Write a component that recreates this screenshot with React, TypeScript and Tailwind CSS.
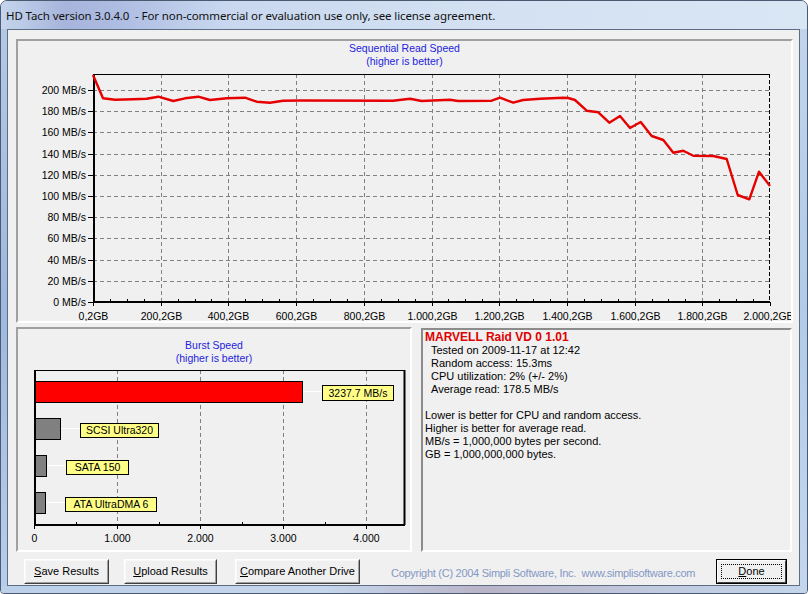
import React from "react";

const FONT = "Liberation Sans, Arial, sans-serif";

const seqPts: [number, number][] = [
  [93, 75], [103, 98.3], [115, 99.7], [133, 99.3], [146.7, 98.7], [158.3, 96.7], [173.3, 101], [185, 98.3],
  [198.3, 96.7], [210, 100], [226.7, 98.3], [245, 97.7], [256.7, 101.7], [270, 102.7], [283, 100.7], [300, 100.5],
  [393, 100.7], [410, 98.7], [421.7, 101], [450, 99.7], [458, 101], [491.7, 100.7], [500, 97.7], [513.3, 102.7],
  [523, 100], [540, 98.7], [563.3, 97.7], [568.3, 98], [575, 100], [586.7, 110.7], [598.3, 112.3], [609.3, 122.7],
  [620, 116], [630, 128], [640.7, 122], [651.7, 136], [663.3, 140], [673.3, 152.7], [683.3, 150.7], [693.3, 155.7],
  [713.3, 156], [726.7, 159], [737.7, 195], [749.3, 199.3], [759, 171.7], [770, 186],
];

function SeqChart() {
  const X0 = 93, X1 = 770, Y0 = 74, Y1 = 302;
  const xs = Array.from({ length: 11 }, (_, i) => Math.round(X0 + i * 67.7) + 0.5);
  const ys = Array.from({ length: 11 }, (_, k) => Math.round(Y1 - k * 21.2) + 0.5);
  const xl = ["0,2GB", "200,2GB", "400,2GB", "600,2GB", "800,2GB", "1.000,2GB", "1.200,2GB", "1.400,2GB", "1.600,2GB", "1.800,2GB", "2.000,2GB"];
  const minors = Array.from({ length: 41 }, (_, j) => Math.round(X0 + j * 16.925) + 0.5);
  return (
    <svg width={773} height={253} className="block">
      <g transform="translate(-18 -68)" fontFamily={FONT} fontSize={10.5}>
        {ys.slice(1).map((y, k) => (
          <line key={"h" + k} x1={X0} x2={X1} y1={y} y2={y} stroke="#808080" strokeDasharray="4 3" />
        ))}
        {xs.slice(1, 10).map((x, i) => (
          <line key={"v" + i} x1={x} x2={x} y1={Y0} y2={Y1} stroke="#808080" strokeDasharray="4 3" />
        ))}
        {minors.map((x, j) => (
          <line key={"m" + j} x1={x} x2={x} y1={j % 4 === 0 ? Y1 + 4 : Y1 - 3} y2={Y1} stroke="#000" />
        ))}
        {ys.map((y, k) => (
          <g key={"y" + k}>
            <line x1={88} x2={93} y1={y} y2={y} stroke="#000" />
            <text x={86} y={y + 3.8} textAnchor="end" fill="#000">{k * 20} MB/s</text>
          </g>
        ))}
        {xs.map((x, i) => (
          <text key={"xl" + i} x={i === 10 ? x - 2 : x} y={320} textAnchor="middle" fill="#000">{xl[i]}</text>
        ))}
        <line x1={X0} x2={X1} y1={74.5} y2={74.5} stroke="#000" />
        <line x1={769.5} x2={769.5} y1={Y0} y2={Y1} stroke="#000" strokeDasharray="4 2" />
        <line x1={94} x2={94} y1={Y0} y2={Y1 + 1} stroke="#000" strokeWidth={2} />
        <line x1={X0} x2={X1} y1={302} y2={302} stroke="#000" strokeWidth={2} />
        <polyline
          points={seqPts.map((p) => p.join(",")).join(" ")}
          fill="none"
          stroke="#e60000"
          strokeWidth={2.4}
          strokeLinejoin="round"
        />
      </g>
    </svg>
  );
}

function BurstChart() {
  const X0 = 34, X1 = 405, Y0 = 370, Y1 = 525;
  const step = 83.1;
  const xs = [0, 1, 2, 3, 4].map((i) => Math.round(X0 + i * step) + 0.5);
  const labels = ["0", "1.000", "2.000", "3.000", "4.000"];
  const bars = [
    { w: 302, y: 381, fill: "#ff0000", lx: 322, lw: 71, ly: 385, lh: 15, t: "3237.7 MB/s" },
    { w: 60, y: 418, fill: "#808080", lx: 80, lw: 78, ly: 423, lh: 14, t: "SCSI Ultra320" },
    { w: 46, y: 455, fill: "#808080", lx: 66, lw: 62, ly: 460, lh: 14, t: "SATA 150" },
    { w: 45, y: 492, fill: "#808080", lx: 65, lw: 91, ly: 497, lh: 14, t: "ATA UltraDMA 6" },
  ];
  return (
    <svg width={392} height={185} className="block">
      <g transform="translate(-18 -365)" fontFamily={FONT} fontSize={10.5}>
        {xs.slice(1).map((x, i) => (
          <line key={"v" + i} x1={x} x2={x} y1={Y0} y2={Y1} stroke="#808080" strokeDasharray="4 3" />
        ))}
        {Array.from({ length: 9 }, (_, j) => Math.round(X0 + j * step / 2) + 0.5).map((x, j) => (
          <line key={"m" + j} x1={x} x2={x} y1={j % 2 === 0 ? Y1 + 4 : Y1 - 3} y2={Y1} stroke="#000" />
        ))}
        {xs.map((x, i) => (
          <text key={"l" + i} x={x} y={542} textAnchor="middle" fill="#000">{labels[i]}</text>
        ))}
        {bars.map((b, i) => (
          <g key={"b" + i}>
            <line x1={b.w} x2={b.lx} y1={b.y + 10.5} y2={b.y + 10.5} stroke="#ffffff" />
            <rect x={X0 + 0.5} y={b.y + 0.5} width={b.w - X0} height={21} fill={b.fill} stroke="#000" />
            <rect x={b.lx + 0.5} y={b.ly + 0.5} width={b.lw} height={b.lh} fill="#ffff88" stroke="#000" />
            <text x={b.lx + 0.5 + b.lw / 2} y={b.ly + b.lh / 2 + 4.3} textAnchor="middle" fill="#000">{b.t}</text>
          </g>
        ))}
        <rect x={X0 + 1} y={Y0 + 0.5} width={X1 - X0 - 1.5} height={Y1 - Y0 - 0.5} fill="none" stroke="#000" strokeWidth={1} />
        <line x1={35} x2={35} y1={Y0} y2={Y1 + 1} stroke="#000" strokeWidth={2} />
        <line x1={X0} x2={X1} y1={Y1} y2={Y1} stroke="#000" strokeWidth={2} />
        <line x1={X1 - 0.5} x2={X1 - 0.5} y1={Y0} y2={Y1} stroke="#000" strokeWidth={2} />
      </g>
    </svg>
  );
}

function Btn({ w, ul, rest }: { w: string; ul: string; rest: string }) {
  return (
    <div className={`${w} h-[25px] border border-t-white border-l-white border-r-[#404040] border-b-[#404040]`}>
      <div className="w-full h-full border border-t-[#f8f8f8] border-l-[#f8f8f8] border-r-[#a0a0a0] border-b-[#a0a0a0] bg-[#f0f0f0] flex items-center justify-center text-[11px] text-black">
        <span>
          <span className="underline underline-offset-[1px]">{ul}</span>
          {rest}
        </span>
      </div>
    </div>
  );
}

export default function App() {
  return (
    <div className="w-[808px] h-[594px] flex flex-col overflow-hidden rounded-t-[7px] rounded-b-[4px] border border-[#4a5a70] bg-[linear-gradient(180deg,#c2d4ec_0%,#b7cce8_60%,#c5d7ee_100%)] font-['Liberation_Sans',Arial,sans-serif] text-black">
      <div className="h-[28px] shrink-0 flex items-center pl-[5px] pt-[1px] bg-[linear-gradient(90deg,#c5d5ec_0%,#a7b4dc_8%,#aebde2_15%,#c9d8ef_28%,#d3e1f2_60%,#d9e6f4_100%)] text-[11.5px] tracking-[-0.1px] font-['Noto_Sans',sans-serif] text-[#111]">
        HD Tach version 3.0.4.0&nbsp; - For non-commercial or evaluation use only, see license agreement.
      </div>
      <div className="flex flex-1">
        <div className="w-[6px] shrink-0 bg-[linear-gradient(180deg,#b4c8e4,#9fb8de_50%,#b8cde9)]" />
        <div className="w-[793px] h-[557px] shrink-0 border border-[#5d6e84] bg-[#f0f0f0] flex flex-col pl-[8px] pt-[9px]">
          <div className="w-[777px] h-[284px] shrink-0 border-2 border-t-[#a0a0a0] border-l-[#a0a0a0] border-r-white border-b-white flex flex-col overflow-hidden">
            <div className="pt-[1px] leading-[13px] text-[10.5px] text-[#2323dd] text-center">
              <div>Sequential Read Speed</div>
              <div>(higher is better)</div>
            </div>
            <SeqChart />
          </div>
          <div className="mt-[4px] flex h-[225px] shrink-0">
            <div className="w-[396px] h-full border-2 border-t-[#a0a0a0] border-l-[#a0a0a0] border-r-white border-b-white flex flex-col overflow-hidden">
              <div className="pt-[10px] leading-[13px] text-[10.5px] text-[#2323dd] text-center">
                <div>Burst Speed</div>
                <div>(higher is better)</div>
              </div>
              <BurstChart />
            </div>
            <div className="ml-[9px] mt-[1px] w-[371px] h-[224px] border-2 border-t-[#8c8c8c] border-l-[#8c8c8c] border-r-white border-b-white bg-[#f0f0f0] pt-[1px] pl-[2px] text-[11px] leading-[13px] text-black">
              <div className="text-[12px] font-bold text-[#e00000]">MARVELL Raid VD 0 1.01</div>
              <div className="pl-[6px]">Tested on 2009-11-17 at 12:42</div>
              <div className="pl-[6px]">Random access: 15.3ms</div>
              <div className="pl-[6px]">CPU utilization: 2% (+/- 2%)</div>
              <div className="pl-[6px]">Average read: 178.5 MB/s</div>
              <div className="h-[13px]" />
              <div>Lower is better for CPU and random access.</div>
              <div>Higher is better for average read.</div>
              <div>MB/s = 1,000,000 bytes per second.</div>
              <div>GB = 1,000,000,000 bytes.</div>
            </div>
          </div>
          <div className="mt-[7px] flex w-[771px] h-[25px] shrink-0">
            <div className="ml-[8px]"><Btn w="w-[85px]" ul="S" rest="ave Results" /></div>
            <div className="ml-[15px]"><Btn w="w-[93px]" ul="U" rest="pload Results" /></div>
            <div className="ml-[18px]"><Btn w="w-[125px]" ul="C" rest="ompare Another Drive" /></div>
            <div className="ml-[31px] pt-[8px] text-[11px] tracking-[-0.28px] text-[#8498c4] whitespace-pre leading-[13px]">
              Copyright (C) 2004 Simpli Software, Inc.  www.simplisoftware.com
            </div>
            <div className="ml-auto w-[71px] h-[25px] border border-black">
              <div className="relative w-full h-full border border-t-white border-l-white border-r-[#404040] border-b-[#404040] bg-[#f0f0f0] flex items-center justify-center text-[11px]">
                <div className="absolute inset-[3px] border border-dotted border-black" />
                <span>
                  <span className="underline underline-offset-[1px]">D</span>one
                </span>
              </div>
            </div>
          </div>
        </div>
        <div className="flex-1 bg-[linear-gradient(180deg,#c0d4ec,#b3cbe8_50%,#c3d6ee)]" />
      </div>
      <div className="h-[7px] shrink-0 bg-[linear-gradient(90deg,#bcd0ea_0%,#c6d6ec_40%,#b9b4c8_60%,#c1c9de_80%,#c3d5ec_100%)]" />
    </div>
  );
}
